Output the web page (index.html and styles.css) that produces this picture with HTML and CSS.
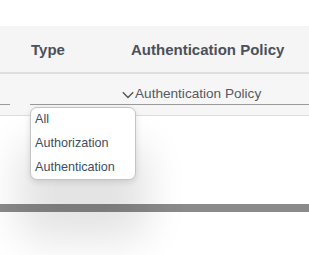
FILE: index.html
```html
<!DOCTYPE html>
<html>
<head>
<meta charset="utf-8">
<link rel="stylesheet" href="styles.css">
</head>
<body>
<div class="page">
  <div class="table-head">
    <div class="th th-type">Type</div>
    <div class="th th-policy">Authentication Policy</div>
  </div>
  <div class="filter-row">
    <div class="filter filter-prev"></div>
    <div class="filter filter-select">
      <svg class="chev" width="12" height="8" viewBox="0 0 12 8"><path d="M0.8 1.2 L6 6.4 L11.2 1.2" fill="none" stroke="#555" stroke-width="1.4"/></svg>
      <span class="select-text">Authentication Policy</span>
    </div>
  </div>
  <div class="spacer"></div>
  <div class="bar"></div>
  <ul class="menu">
    <li>All</li>
    <li>Authorization</li>
    <li>Authentication</li>
  </ul>
</div>
</body>
</html>
```

FILE: styles.css
```css
html, body {
  margin: 0;
  padding: 0;
  background: #ffffff;
}
body {
  font-family: "Liberation Sans", Arial, sans-serif;
  width: 309px;
  height: 255px;
  overflow: hidden;
}
.page {
  position: relative;
  padding-top: 26px;
}
.table-head {
  display: flex;
  align-items: center;
  height: 46px;
  background: #f5f5f5;
  border-bottom: 2px solid #dedede;
  padding-left: 31px;
  box-sizing: content-box;
}
.th {
  font-weight: bold;
  font-size: 15px;
  color: #4b505b;
  white-space: nowrap;
}
.th-type {
  width: 100px;
  margin-top: 1px;
}
.th-policy {
  margin-top: 1px;
}
.filter-row {
  display: flex;
  align-items: flex-end;
  height: 31px;
  padding-bottom: 10px;
  background: #f6f6f6;
  border-bottom: 1px solid #dddddd;
}
.filter {
  border-bottom: 1px solid #9a9a9a;
  height: 16px;
}
.filter-prev {
  width: 10px;
  margin-right: 20px;
}
.filter-select {
  flex: 1;
  display: flex;
  align-items: center;
  padding-left: 92px;
  height: 20px;
}
.chev {
  display: block;
  margin-right: 1px;
  margin-top: 1px;
}
.select-text {
  font-size: 13.6px;
  color: #555a62;
  white-space: nowrap;
  line-height: 16px;
  margin-top: -1px;
}
.spacer {
  height: 88px;
}
.bar {
  height: 8px;
  background: #8a8a8a;
}
.menu {
  position: absolute;
  left: 30px;
  top: 107px;
  width: 104px;
  margin: 0;
  padding: 0;
  list-style: none;
  background: #ffffff;
  border: 1px solid #c4c4c4;
  border-radius: 7px;
  box-shadow: 0 2px 6px rgba(0, 0, 0, 0.12), 0 48px 40px 12px rgba(0, 0, 0, 0.11);
}
.menu li {
  font-size: 12.6px;
  line-height: 24px;
  height: 24px;
  padding-left: 4px;
  color: #3c4d68;
  white-space: nowrap;
}
.menu li:first-child {
  margin-top: -1px;
}
```
